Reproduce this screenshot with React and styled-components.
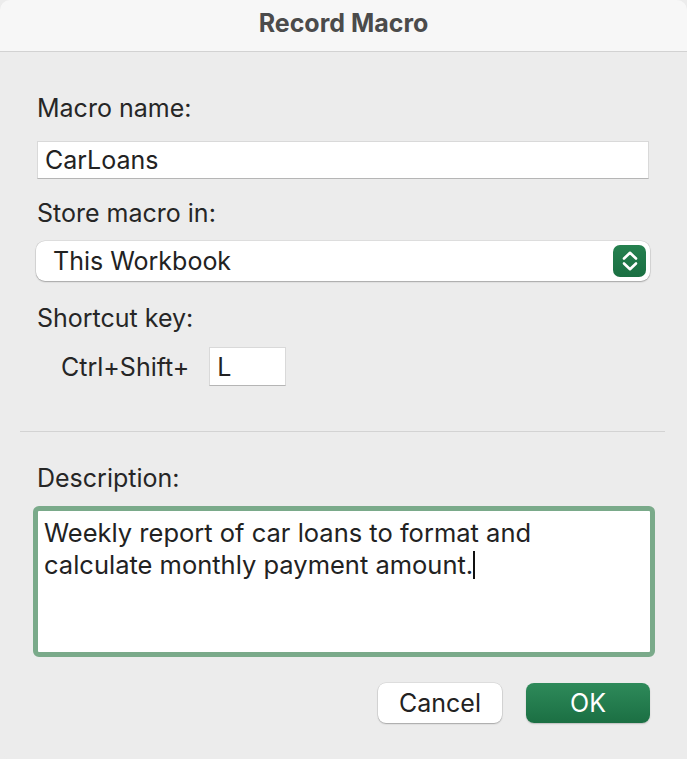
import React from 'react';
import styled, { createGlobalStyle } from 'styled-components';

const Global = createGlobalStyle`
  html, body {
    margin: 0;
    padding: 0;
    background: #ececec;
  }
  body {
    font-family: 'Inter', 'Liberation Sans', sans-serif;
    color: #262626;
  }
`;

const Window = styled.div`
  width: 687px;
  height: 759px;
  background: #ececec;
  border-radius: 10px;
  overflow: hidden;
  display: flex;
  flex-direction: column;
`;

const TitleBar = styled.div`
  height: 52px;
  box-sizing: border-box;
  padding-bottom: 6px;
  background: #f7f7f7;
  border-bottom: 1px solid #d2d2d2;
  display: flex;
  align-items: center;
  justify-content: center;
  font-size: 25px;
  font-weight: 700;
  color: #4b4b4b;
  flex-shrink: 0;
`;

const Body = styled.div`
  padding: 41px 20px 0 20px;
  display: flex;
  flex-direction: column;
`;

const Section = styled.div`
  padding: 0 18px 0 17px;
  display: flex;
  flex-direction: column;
`;

const Label = styled.div`
  font-size: 25px;
  line-height: 30px;
  margin-top: ${p => p.$mt || 0}px;
  color: #262626;
`;

const TextField = styled.div`
  margin-top: ${p => p.$mt || 0}px;
  height: ${p => p.$h || 38}px;
  background: #fff;
  border: 1px solid #d9d9d9;
  border-bottom-color: #b5b5b5;
  box-sizing: border-box;
  display: flex;
  align-items: center;
  padding-left: 7px;
  font-size: 25px;
  color: #222;
`;

const Select = styled.div`
  margin-top: 13px;
  margin-left: -1px;
  margin-right: -1px;
  height: 40px;
  background: #fff;
  border-radius: 9px;
  box-shadow: 0 0 0 0.5px rgba(0, 0, 0, 0.12), 0 1px 1.5px rgba(0, 0, 0, 0.25);
  display: flex;
  align-items: center;
  justify-content: space-between;
  padding: 0 4px 0 17px;
  font-size: 25px;
  color: #222;
`;

const Stepper = styled.div`
  width: 33px;
  height: 32px;
  border-radius: 7px;
  background: linear-gradient(#25804f, #1a6f42);
  display: flex;
  align-items: center;
  justify-content: center;
`;

const ShortcutRow = styled.div`
  margin-top: 14px;
  display: flex;
  align-items: center;
  padding-left: 24px;
  font-size: 25px;
  gap: 20px;
`;

const KeyBox = styled(TextField)`
  width: 77px;
`;

const Divider = styled.div`
  margin-top: 45px;
  height: 1px;
  background: #d3d3d3;
  margin-right: 2px;
`;

const TextArea = styled.div`
  margin-top: 13px;
  margin-left: -4px;
  margin-right: -6px;
  height: 151px;
  box-sizing: border-box;
  border: 5px solid #7aaa8a;
  border-radius: 6px;
  background: #fff;
  padding: 6px 6px;
  font-size: 25.5px;
  line-height: 32px;
  color: #222;
`;

const Caret = styled.span`
  display: inline-block;
  width: 1.5px;
  height: 28px;
  background: #111;
  vertical-align: -5px;
`;

const ButtonRow = styled.div`
  margin-top: 26px;
  margin-right: -1px;
  display: flex;
  justify-content: flex-end;
  gap: 24px;
`;

const Button = styled.div`
  width: 124px;
  height: 40px;
  border-radius: 8px;
  display: flex;
  align-items: center;
  justify-content: center;
  font-size: 25px;
  box-sizing: border-box;
  background: ${p => (p.$primary ? 'linear-gradient(#2e8a5a, #1b6f43)' : '#fff')};
  color: ${p => (p.$primary ? '#fff' : '#222')};
  box-shadow: ${p =>
    p.$primary
      ? '0 1px 1.5px rgba(0,0,0,0.2)'
      : '0 0 0 0.5px rgba(0,0,0,0.12), 0 1px 1.5px rgba(0,0,0,0.25)'};
`;

const Chevrons = () => (
  <svg width="18" height="24" viewBox="0 0 18 24" fill="none">
    <path d="M3 9.5 L9 3.8 L15 9.5" stroke="#fff" strokeWidth="2.6" strokeLinecap="round" strokeLinejoin="round" />
    <path d="M3 14.5 L9 20.2 L15 14.5" stroke="#fff" strokeWidth="2.6" strokeLinecap="round" strokeLinejoin="round" />
  </svg>
);

export default function App() {
  return (
    <Window>
      <Global />
      <TitleBar>Record Macro</TitleBar>
      <Body>
        <Section>
          <Label>Macro name:</Label>
          <TextField $mt={18}>CarLoans</TextField>
          <Label $mt={19}>Store macro in:</Label>
          <Select>
            This Workbook
            <Stepper>
              <Chevrons />
            </Stepper>
          </Select>
          <Label $mt={22}>Shortcut key:</Label>
          <ShortcutRow>
            Ctrl+Shift+
            <KeyBox $h={39}>L</KeyBox>
          </ShortcutRow>
        </Section>
        <Divider />
        <Section>
          <Label $mt={31}>Description:</Label>
          <TextArea>
            Weekly report of car loans to format and
            <br />
            calculate monthly payment amount.
            <Caret />
          </TextArea>
          <ButtonRow>
            <Button>Cancel</Button>
            <Button $primary>OK</Button>
          </ButtonRow>
        </Section>
      </Body>
    </Window>
  );
}
